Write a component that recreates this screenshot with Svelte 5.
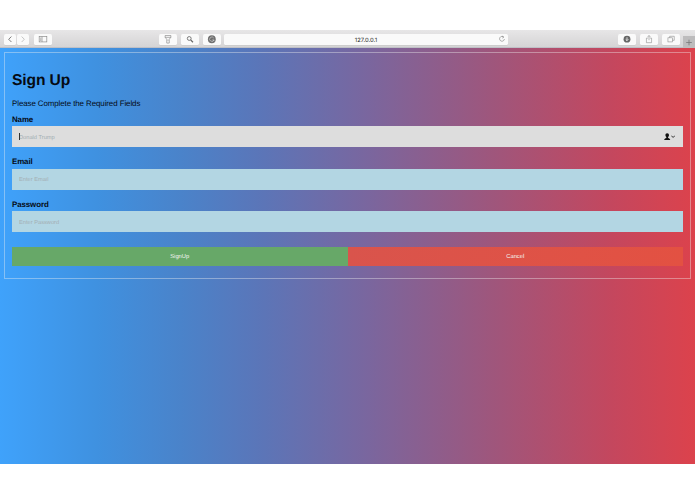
<script lang="ts">
  const fields = [
    { id: "name", label: "Name", type: "text", placeholder: "Donald Trump", active: true },
    { id: "email", label: "Email", type: "text", placeholder: "Enter Email", active: false },
    { id: "password", label: "Password", type: "password", placeholder: "Enter Password", active: false },
  ];
</script>

<div class="window">
  <header class="toolbar">
    <div class="group nav">
      <div class="group history">
        <button class="tool small" type="button" aria-label="Back">
          <svg viewBox="0 0 12 11"><path d="M7.5 2.7 4.6 5.5l2.9 2.9" stroke="#777" stroke-width="1" /></svg>
        </button>
        <button class="tool small" type="button" aria-label="Forward">
          <svg viewBox="0 0 12 11"><path d="m4.6 2.7 2.8 2.8-2.8 2.9" stroke="#bbb" stroke-width="0.9" /></svg>
        </button>
      </div>
      <button class="tool" type="button" aria-label="Sidebar">
        <svg viewBox="0 0 18 11" stroke="#888" stroke-width="0.7">
          <rect x="5" y="2.7" width="8" height="5.6" />
          <path d="M8 2.7v5.6M6 4.3h1.2M6 5.5h1.2M6 6.7h1.2" />
        </svg>
      </button>
    </div>

    <div class="group extensions">
      <button class="tool" type="button" aria-label="Flashlight">
        <svg viewBox="0 0 18 11" stroke="#777" stroke-width="0.6">
          <path d="M6 1.6h6v1.9L10.3 5.5v4H7.7v-4L6 3.5zM6 3.5h6M9 6v1.2" />
        </svg>
      </button>
      <button class="tool" type="button" aria-label="Search">
        <svg viewBox="0 0 18 11" stroke="#666">
          <circle cx="8.2" cy="4.7" r="2" stroke-width="0.9" />
          <path d="m9.7 6.2 2.4 2.5" stroke-width="1.3" />
        </svg>
      </button>
      <button class="tool" type="button" aria-label="Grammar">
        <svg viewBox="0 0 18 11">
          <circle cx="8.8" cy="5.5" r="4.1" fill="#707070" />
          <path d="M10.8 4.2a2.3 2.3 0 1 0 .2 2.1H9.2M11 6v1.5" stroke="#ddd" stroke-width="0.6" />
        </svg>
      </button>
    </div>

    <div class="address">
      <span>127.0.0.1</span>
      <svg class="reload" viewBox="0 0 8 8">
        <path d="M5.7 2.1A2.4 2.4 0 1 0 6.4 4M4.2 1.1l1.5 1-1.4 1" stroke="#777" stroke-width="0.6" />
      </svg>
    </div>

    <div class="group actions">
      <button class="tool" type="button" aria-label="Downloads">
        <svg viewBox="0 0 18 11">
          <circle cx="9" cy="5.4" r="3.6" fill="#666" />
          <path d="M9 3.4v3.4M7.6 5.6 9 7l1.4-1.4" stroke="#fff" stroke-width="0.8" />
        </svg>
      </button>
      <button class="tool" type="button" aria-label="Share">
        <svg viewBox="0 0 18 11" stroke="#888" stroke-width="0.6">
          <path d="M8 4.3H6.3v4.8h5.4V4.3H10M9 6.5V1.6M7.6 3 9 1.6 10.4 3" />
        </svg>
      </button>
      <button class="tool" type="button" aria-label="Tabs">
        <svg viewBox="0 0 18 11" stroke="#888" stroke-width="0.6">
          <rect x="5.8" y="4" width="4.8" height="4.3" />
          <path d="M7.6 4V2.4h4.8v4.2h-1.8" />
        </svg>
      </button>
    </div>
    <button class="new-tab" type="button" aria-label="New tab">
      <svg viewBox="0 0 12 12"><path d="M6 3.7v5.6M3.2 6.5h5.6" stroke="#777" stroke-width="0.8" /></svg>
    </button>
  </header>

  <main>
    <form>
      <h1>Sign Up</h1>
      <p>Please Complete the Required Fields</p>

      {#each fields as field (field.id)}
        <label for={field.id}>{field.label}</label>
        <div class="field" class:active={field.active}>
          <input id={field.id} type={field.type} placeholder={field.placeholder} />
          {#if field.active}
            <span class="caret"></span>
            <svg class="contact" viewBox="0 0 12 8">
              <path
                d="M3.2.3c1.2 0 1.8.8 1.8 1.9 0 .8-.4 1.4-.9 1.8v.9c1.1.3 2.1.7 2.1 2.2H.2C.2 5.6 1.2 5.2 2.3 4.9V4c-.5-.4-.9-1-.9-1.8C1.4 1.1 2 .3 3.2.3z"
                fill="#111"
              />
              <path d="m7.4 3 1.7 1.3L10.8 3" stroke="#333" stroke-width="1" />
            </svg>
          {/if}
        </div>
      {/each}

      <div class="buttons">
        <button class="signup" type="button">SignUp</button>
        <button class="cancel" type="button">Cancel</button>
      </div>
    </form>
  </main>
</div>

<style>
  :global(body) {
    background: #fff;
  }

  * {
    box-sizing: border-box;
  }

  .window {
    width: 695px;
    height: 494px;
    padding: 30px 0;
    font-family: "Liberation Sans", Arial, sans-serif;
    color: #050b14;
    text-rendering: geometricPrecision;
  }

  .toolbar {
    display: flex;
    align-items: flex-start;
    height: 18px;
    padding-top: 4px;
    padding-left: 4px;
    background: linear-gradient(#e7e6e7, #d5d4d5);
    border-bottom: 1px solid #bfc0c6;
  }

  .group {
    display: flex;
    gap: 4px;
  }

  .nav {
    width: 155px;
    gap: 5px;
  }

  .history {
    gap: 1px;
  }

  .actions {
    margin-left: 109.5px;
  }

  .tool {
    width: 18px;
    height: 10.5px;
    padding: 0;
    border: 0;
    border-radius: 1.5px;
    background: #fafafa;
    box-shadow: 0 0.5px 0.5px #c4c4c4;
  }

  .tool.small {
    width: 12px;
  }

  svg {
    display: block;
    width: 100%;
    height: 100%;
    fill: none;
  }

  .address {
    display: flex;
    align-items: center;
    justify-content: center;
    position: relative;
    width: 284px;
    height: 10.5px;
    margin-left: 3px;
    padding-top: 2px;
    border-radius: 1.5px;
    background: #fafafa;
    box-shadow: 0 0.5px 0.5px #c4c4c4;
    color: #222;
    font-family: Inter, sans-serif;
    font-size: 5.9px;
  }

  .reload {
    position: absolute;
    top: 1px;
    right: 2px;
    width: 8px;
    height: 8px;
  }

  .new-tab {
    align-self: flex-end;
    width: 12px;
    height: 12px;
    margin-left: auto;
    margin-bottom: -1px;
    padding: 0;
    border: 0;
    background: #bdbcbd;
  }

  main {
    height: 416px;
    padding: 4px;
    background: linear-gradient(
      90deg,
      #3fa2fb 0%,
      #3f91e0 14%,
      #4a83ca 26%,
      #5a76b9 37%,
      #7867a0 52%,
      #a1557a 72%,
      #c4475e 88%,
      #dc424c 100%
    );
  }

  form {
    height: 227px;
    padding: 19px 7px 0;
    border: 1px solid rgba(241, 241, 241, 0.4);
  }

  h1 {
    margin: 0;
    font-size: 15.6px;
    letter-spacing: -0.1px;
    line-height: 18px;
  }

  p {
    margin: 8.5px 0 6.5px;
    font-size: 7.9px;
    letter-spacing: -0.07px;
    line-height: 10px;
  }

  label {
    display: block;
    font-size: 7.9px;
    font-weight: bold;
    letter-spacing: -0.08px;
    line-height: 10px;
  }

  .field {
    position: relative;
    height: 21.2px;
    margin: 1.2px 0 10px;
    background: #b3d6e3;
  }

  .field.active {
    background: #ddd;
  }

  input {
    display: block;
    width: 100%;
    height: 100%;
    padding: 2px 7px 0;
    border: 0;
    outline: 0;
    background: transparent;
    font-family: inherit;
    font-size: 5.7px;
    text-rendering: inherit;
  }

  input::placeholder {
    color: #a4afb3;
    opacity: 1;
  }

  .caret {
    position: absolute;
    top: 7px;
    left: 7px;
    width: 1px;
    height: 7px;
    background: #333;
  }

  .contact {
    position: absolute;
    top: 6.5px;
    right: 7px;
    width: 12px;
    height: 8px;
  }

  .buttons {
    display: flex;
    margin-top: 14.5px;
  }

  .buttons button {
    flex: 1;
    height: 19.5px;
    padding: 2px 0 0;
    border: 0;
    color: #f4f4f4;
    font-family: inherit;
    font-size: 5.8px;
    text-rendering: inherit;
  }

  .signup {
    background: #67a868;
  }

  .cancel {
    background: linear-gradient(90deg, #d9544c, #e35142);
  }
</style>
